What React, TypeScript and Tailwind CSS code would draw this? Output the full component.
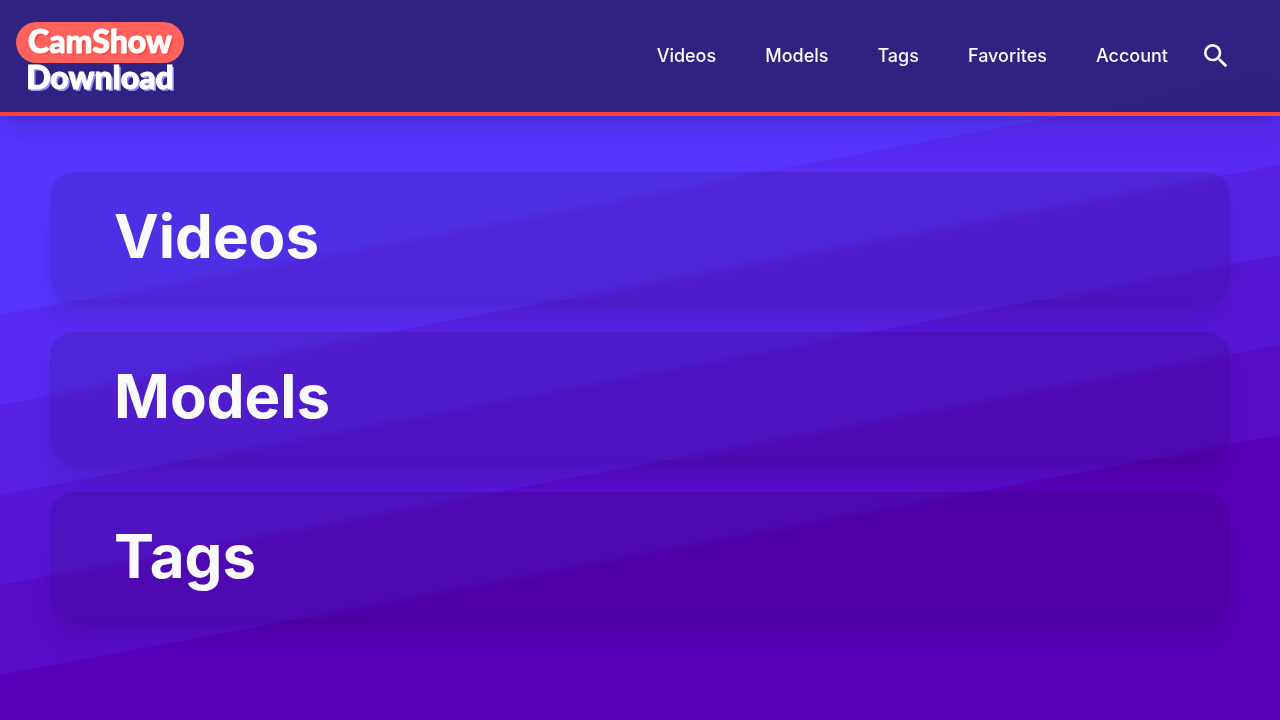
import { MdSearch } from "react-icons/md";

const links = [
  { href: "#videos", label: "Videos" },
  { href: "#models", label: "Models" },
  { href: "#tags", label: "Tags" },
  { href: "#favorites", label: "Favorites" },
  { href: "#account", label: "Account" },
];

const sections = ["Videos", "Models", "Tags"];

const bands = [
  { y: 350, fill: "#572bf2" },
  { y: 450, fill: "#5720e3" },
  { y: 550, fill: "#5715d5" },
  { y: 650, fill: "#570bc6" },
  { y: 750, fill: "#5700b8" },
];

function Backdrop() {
  return (
    <svg
      className="fixed inset-0 -z-10 h-full w-full"
      viewBox="0 0 1600 800"
      preserveAspectRatio="xMinYMin slice"
      aria-hidden="true"
    >
      <rect width="1600" height="800" fill="#5735ff" />
      {bands.map(({ y, fill }) => (
        <polygon key={y} fill={fill} points={`0,${y} 1600,${y - 300} 1600,1200 0,1200`} />
      ))}
    </svg>
  );
}

function Logo() {
  return (
    <a
      href="#home"
      className="flex w-[168px] flex-col items-center py-1 font-['Lato',sans-serif] text-[32px] font-black text-white [-webkit-text-stroke:1px_white]"
    >
      <span className="w-full rounded-full bg-[#ff625c] pb-1 text-center leading-[37px] [text-shadow:2px_2px_0_#ff443b]">
        CamShow
      </span>
      <span className="leading-[28px] [text-shadow:2px_2px_0_#9090f8]">Download</span>
    </a>
  );
}

export default function App() {
  return (
    <div className="isolate min-h-screen font-['Inter',sans-serif] text-gray-50">
      <Backdrop />

      <header className="flex items-center justify-between border-b-4 border-[#fb4439] bg-[#2c2072]/90 pl-4 pr-12 shadow-xl backdrop-blur-lg">
        <Logo />
        <div className="flex h-28 items-center gap-8">
          <nav className="flex items-center gap-[49px]">
            {links.map(({ href, label }) => (
              <a key={href} href={href} className="text-lg font-medium hover:text-white">
                {label}
              </a>
            ))}
          </nav>
          <button type="button" aria-label="Search" className="cursor-pointer">
            <MdSearch size={32} />
          </button>
        </div>
      </header>

      <main className="flex flex-col gap-8 px-[50px] py-14">
        {sections.map((title) => (
          <section
            key={title}
            className="rounded-3xl bg-black/10 px-16 py-8 shadow-xl backdrop-blur-xs"
          >
            <h2 className="text-[60px] leading-16 font-bold">{title}</h2>
          </section>
        ))}
      </main>
    </div>
  );
}
